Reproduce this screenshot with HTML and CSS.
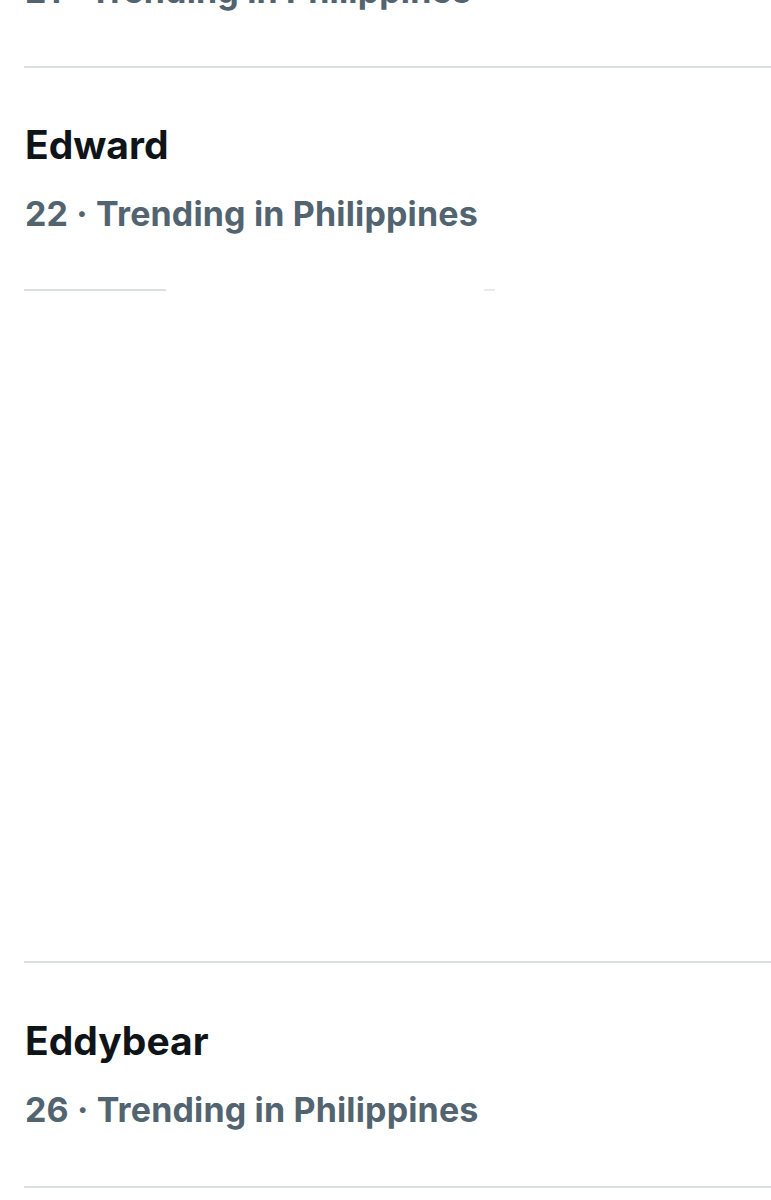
FILE: index.html
```html
<!DOCTYPE html>
<html lang="en">
<head>
<meta charset="utf-8">
<title>Trending in Philippines</title>
<link rel="stylesheet" href="styles.css">
</head>
<body>
<main class="trends">
  <section class="trend">
    <div class="trend-title">Eddie</div>
    <div class="trend-meta">21 · Trending in Philippines</div>
  </section>
  <section class="trend trend-open">
    <div class="trend-title">Edward</div>
    <div class="trend-meta">22 · Trending in Philippines</div>
  </section>
  <div class="broken-divider">
    <span class="seg seg-a"></span>
    <span class="seg seg-b"></span>
  </div>
  <div class="blank"></div>
  <section class="trend trend-last">
    <div class="trend-title">Eddybear</div>
    <div class="trend-meta">26 · Trending in Philippines</div>
  </section>
</main>
</body>
</html>
```

FILE: styles.css
```css
html, body {
  margin: 0;
  padding: 0;
  background: #ffffff;
}

body {
  width: 771px;
  height: 1200px;
  overflow: hidden;
  font-family: "Inter", "Lato", "Liberation Sans", sans-serif;
}

.trends {
  margin-top: -155px;
  padding-left: 24px;
  display: flex;
  flex-direction: column;
}

.trend {
  padding: 55px 0 55px 1px;
  border-bottom: 2px solid #dcdfe2;
  display: flex;
  flex-direction: column;
  gap: 27px;
}

.trend-open {
  border-bottom: none;
}

.trend-last {
  padding-top: 56px;
  padding-bottom: 56px;
}

.trend-title {
  font-size: 39px;
  line-height: 44px;
  font-weight: 700;
  letter-spacing: 0;
  color: #0f1419;
}

.trend-meta {
  font-size: 34px;
  line-height: 40px;
  font-weight: 700;
  letter-spacing: 0.15px;
  color: #536471;
}

.broken-divider {
  display: flex;
  height: 2px;
}

.seg {
  display: block;
  height: 2px;
  background: #dcdfe2;
}

.seg-a {
  width: 142px;
}

.seg-b {
  width: 11px;
  margin-left: 318px;
  background: #e8eaec;
}

.blank {
  height: 670px;
  border-bottom: 2px solid #dcdfe2;
}
```
